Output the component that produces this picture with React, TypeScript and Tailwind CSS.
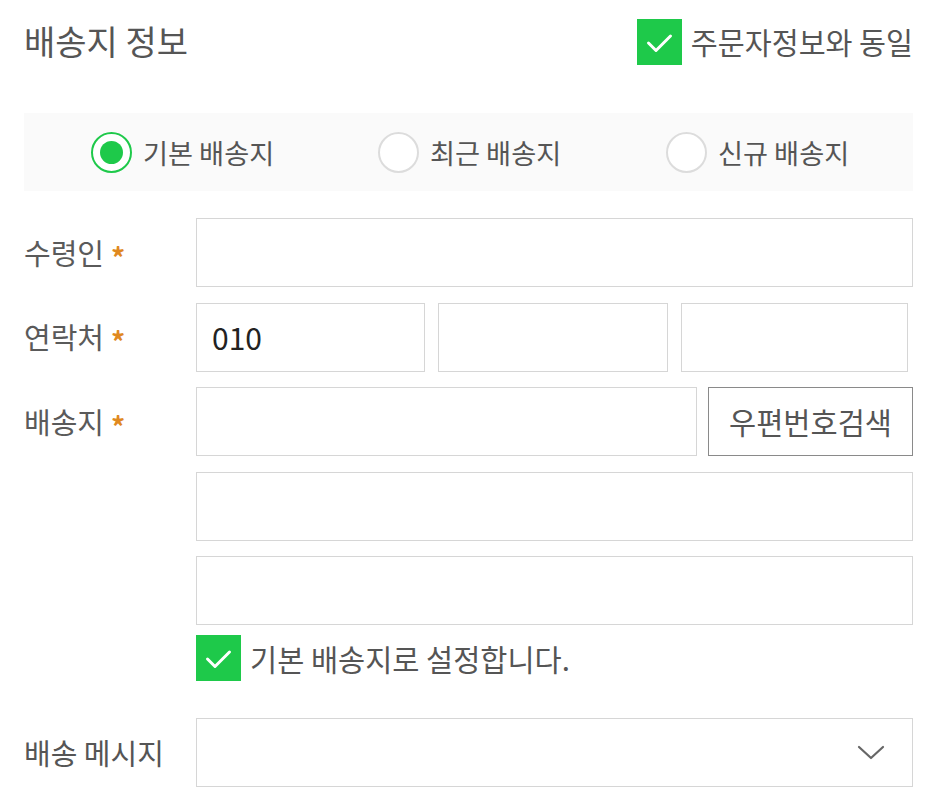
import { useState } from 'react';

const font = { fontFamily: '"Noto Sans CJK KR", "Noto Sans", sans-serif' };

function CheckBox({ checked }: { checked: boolean }) {
    return (
        <div className="w-[45px] h-[46px] bg-[#1ec94a] flex items-center justify-center flex-shrink-0">
            {checked && (
                <svg width="45" height="46" viewBox="0 0 45 46" fill="none">
                    <polyline points="11.5,24 19,31.5 33.5,17" stroke="white" strokeWidth="3" strokeLinecap="round" strokeLinejoin="round" />
                </svg>
            )}
        </div>
    );
}

function Radio({ label, checked, onClick }: { label: string; checked: boolean; onClick: () => void }) {
    return (
        <button onClick={onClick} className="flex items-center gap-[11px]">
            <span
                className={`w-[41px] h-[41px] rounded-full border-2 bg-white flex items-center justify-center ${
                    checked ? 'border-[#1ec94a]' : 'border-[#dcdcdc]'
                }`}
            >
                {checked && <span className="w-[23px] h-[23px] rounded-full bg-[#1ec94a]" />}
            </span>
            <span className="text-[27.2px] text-[#555]">{label}</span>
        </button>
    );
}

function Label({ text, required }: { text: string; required?: boolean }) {
    return (
        <div className="w-[172px] flex-shrink-0 flex items-center text-[29px] text-[#5a5a5a]">
            <span>{text}</span>
            {required && <span className="ml-[7px] mt-[8px] text-[28px] font-bold text-[#e0891f]">*</span>}
        </div>
    );
}

const inputCls = 'h-[69px] border border-[#d6d6d6] bg-white px-[15px] text-[30px] text-[#222] outline-none';

export default function App() {
    const [mode, setMode] = useState(0);

    return (
        <div className="w-[940px] min-h-[809px] bg-white pl-[24px] pr-[27px]" style={font}>
            <div className="flex items-center justify-between h-[85px] pb-[1px]">
                <h2 className="text-[34px] text-[#555] -mt-[4px]">배송지 정보</h2>
                <div className="flex items-center gap-[9px]">
                    <CheckBox checked />
                    <span className="text-[29.3px] text-[#555]">주문자정보와 동일</span>
                </div>
            </div>

            <div className="mt-[28px] h-[78px] bg-[#fafafa] flex items-center pl-[67px]">
                <div className="w-[287px]">
                    <Radio label="기본 배송지" checked={mode === 0} onClick={() => setMode(0)} />
                </div>
                <div className="w-[288px]">
                    <Radio label="최근 배송지" checked={mode === 1} onClick={() => setMode(1)} />
                </div>
                <Radio label="신규 배송지" checked={mode === 2} onClick={() => setMode(2)} />
            </div>

            <div className="mt-[27px] flex flex-col gap-[15.5px]">
                <div className="flex items-center">
                    <Label text="수령인" required />
                    <input className={`${inputCls} w-0 flex-1`} />
                </div>
                <div className="flex items-center">
                    <Label text="연락처" required />
                    <div className="w-0 flex-1 flex gap-[13px] pr-[5px]">
                        <input className={`${inputCls} w-[229px]`} defaultValue="010" />
                        <input className={`${inputCls} w-[230px]`} />
                        <input className={`${inputCls} w-0 flex-1`} />
                    </div>
                </div>
                <div className="flex items-center">
                    <Label text="배송지" required />
                    <div className="w-0 flex-1 flex gap-[11px]">
                        <input className={`${inputCls} w-0 flex-1`} />
                        <button className="w-[205px] h-[69px] border border-[#8a8a8a] bg-white text-[29.5px] text-[#555]">
                            우편번호검색
                        </button>
                    </div>
                </div>
                <div className="flex items-center">
                    <div className="w-[172px] flex-shrink-0" />
                    <input className={`${inputCls} w-0 flex-1`} />
                </div>
                <div className="flex items-center">
                    <div className="w-[172px] flex-shrink-0" />
                    <input className={`${inputCls} w-0 flex-1`} />
                </div>
            </div>

            <div className="mt-[10px] flex items-center pl-[172px] gap-[9px]">
                <CheckBox checked />
                <span className="text-[29.5px] text-[#555]">기본 배송지로 설정합니다.</span>
            </div>

            <div className="mt-[37px] flex items-center">
                <div className="w-[172px] flex-shrink-0 text-[29px] text-[#555] mt-[1px]">배송 메시지</div>
                <div className="flex-1 h-[69px] border border-[#d6d6d6] bg-white flex items-center justify-end pr-[27px]">
                    <svg width="28" height="18" viewBox="0 0 28 18" fill="none">
                        <polyline points="2,3 14,14 26,3" stroke="#666" strokeWidth="2.2" strokeLinecap="round" strokeLinejoin="round" />
                    </svg>
                </div>
            </div>
        </div>
    );
}
